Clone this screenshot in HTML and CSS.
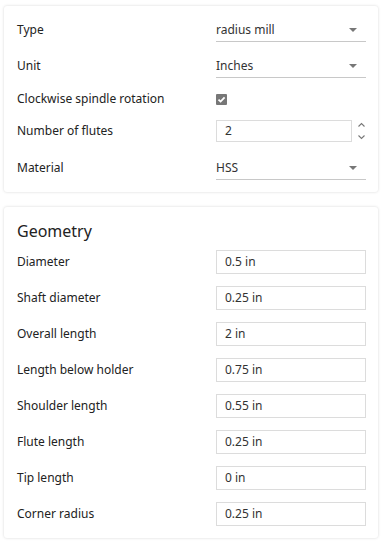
FILE: index.html
```html
<!doctype html>
<html lang="en">
  <head>
    <meta charset="UTF-8" />
    <meta name="viewport" content="width=device-width, initial-scale=1.0" />
    <title>Tool Properties</title>
    <link rel="stylesheet" href="styles.css">
  </head>
  <body>
    <div class="card">
      <div class="row row-select">
        <span class="label">Type</span>
        <div class="select"><span>radius mill</span><i class="caret"></i></div>
      </div>
      <div class="row row-select">
        <span class="label">Unit</span>
        <div class="select"><span>Inches</span><i class="caret"></i></div>
      </div>
      <div class="row row-check">
        <span class="label">Clockwise spindle rotation</span>
        <div class="control">
          <span class="checkbox">
            <svg width="11" height="11" viewBox="0 0 11 11"><path d="M2.5 5.6 L4.6 7.6 L8.6 3.4" fill="none" stroke="#fff" stroke-width="1.8"/></svg>
          </span>
        </div>
      </div>
      <div class="row row-number">
        <span class="label">Number of flutes</span>
        <div class="number">
          <div class="field">2</div>
          <svg class="spin" width="9" height="20" viewBox="0 0 9 20"><path d="M1.5 5.5 L4.5 2.5 L7.5 5.5 M1.5 14.5 L4.5 17.5 L7.5 14.5" fill="none" stroke="#777" stroke-width="1.1"/></svg>
        </div>
      </div>
      <div class="row row-select last">
        <span class="label">Material</span>
        <div class="select"><span>HSS</span><i class="caret"></i></div>
      </div>
    </div>

    <div class="card">
      <h2>Geometry</h2>
      <div class="row"><span class="label">Diameter</span><div class="field">0.5 in</div></div>
      <div class="row"><span class="label">Shaft diameter</span><div class="field">0.25 in</div></div>
      <div class="row"><span class="label">Overall length</span><div class="field">2 in</div></div>
      <div class="row"><span class="label">Length below holder</span><div class="field">0.75 in</div></div>
      <div class="row"><span class="label">Shoulder length</span><div class="field">0.55 in</div></div>
      <div class="row"><span class="label">Flute length</span><div class="field">0.25 in</div></div>
      <div class="row"><span class="label">Tip length</span><div class="field">0 in</div></div>
      <div class="row"><span class="label">Corner radius</span><div class="field">0.25 in</div></div>
    </div>
  </body>
</html>
```

FILE: styles.css
```css
body {
  margin: 0;
  padding: 6px 7px 6px 4px;
  background-color: #fff;
  font-family: "Noto Sans", sans-serif;
  font-size: 12px;
  color: #222;
}

.card {
  background-color: #fff;
  border-radius: 3px;
  box-shadow: 0 0 3px rgba(0, 0, 0, 0.16);
  padding: 12px 12px 12px 13px;
  margin-bottom: 15px;
  display: flex;
  flex-direction: column;
  gap: 12px;
}

h2 {
  margin: 0 0 -5px;
  font-size: 16px;
  font-weight: normal;
  line-height: 24px;
  color: #222;
}

.row {
  display: grid;
  grid-template-columns: 199px 150px;
  align-items: center;
  height: 24px;
  line-height: 16px;
}

.row-check {
  height: 18px;
}

.row-number {
  height: 22px;
}

.row-select.last {
  margin-top: 2px;
}

.select {
  height: 24px;
  display: flex;
  align-items: center;
  justify-content: space-between;
  border-bottom: 1px solid #c8c8c8;
  box-sizing: border-box;
  color: #333;
  padding-right: 9px;
}

.caret {
  width: 0;
  height: 0;
  border-left: 4.5px solid transparent;
  border-right: 4.5px solid transparent;
  border-top: 4.5px solid #777;
}

.field {
  height: 24px;
  box-sizing: border-box;
  border: 1px solid #dcdcdc;
  padding: 0 8px;
  display: flex;
  align-items: center;
  color: #333;
}

.number {
  display: flex;
  align-items: center;
  gap: 5px;
}

.number .field {
  width: 136px;
  height: 22px;
}

.checkbox {
  width: 11px;
  height: 11px;
  background-color: #777;
  border-radius: 1px;
  display: flex;
}
```
